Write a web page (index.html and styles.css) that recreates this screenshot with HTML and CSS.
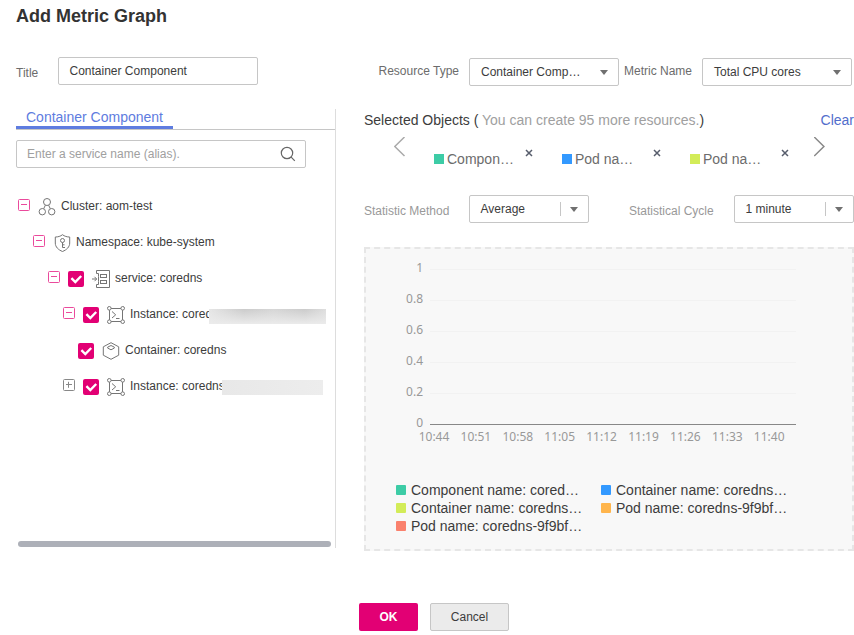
FILE: index.html
```html
<!DOCTYPE html>
<html lang="en">
<head>
<meta charset="utf-8">
<title>Add Metric Graph</title>
<link rel="stylesheet" href="styles.css">
</head>
<body>
<svg class="defs" width="0" height="0" aria-hidden="true">
  <symbol id="minus" viewBox="0 0 12 12"><rect x=".5" y=".5" width="11" height="11" rx="1"/><path d="M3 5.5h6"/></symbol>
  <symbol id="plus" viewBox="0 0 12 12"><rect x=".5" y=".5" width="11" height="11" rx="1"/><path d="M3 5.5h6M5.5 2.800v6"/></symbol>
  <symbol id="check" viewBox="0 0 16 16"><path d="M3.400 7.200l3.900 3.900 5.900-6.100"/></symbol>
  <symbol id="cluster" viewBox="0 0 18 18"><circle cx="9" cy="4" r="3.500"/><circle cx="4.300" cy="13.700" r="3.200"/><circle cx="13.700" cy="13.700" r="3.200"/><path d="M7.400 7.200L5.700 10.700M10.600 7.200l1.700 3.500"/></symbol>
  <symbol id="shield" viewBox="0 0 18 18"><path d="M9.500.7C7.500 2.300 5 3 2.300 3v6c0 4 3 6.800 7.200 8.500C13.700 15.800 16.700 13 16.700 9V3C14 3 11.500 2.300 9.500.7z"/><circle cx="9.500" cy="6.500" r="2"/><path d="M9.500 8.500v5M9.500 10.800h2M9.500 13.500h2.500"/></symbol>
  <symbol id="service" viewBox="0 0 18 18"><path d="M4.500 3.500v-3h13v17h-13v-3M4.500 3.500h2v3M4.500 14.500h2v-3M6.500 6.500v5M0 9h4.500M2.500 6.800L4.700 9l-2.200 2.200"/><rect x="8.500" y="4.500" width="6" height="3"/><rect x="8.500" y="10.500" width="6" height="3"/></symbol>
  <symbol id="instance" viewBox="0 0 18 18"><circle cx="2.300" cy="2.300" r="1.800"/><circle cx="15.700" cy="2.300" r="1.800"/><circle cx="2.300" cy="15.700" r="1.800"/><circle cx="15.700" cy="15.700" r="1.800"/><path d="M4.100 2.500h9.800M4.100 15.500h9.800M2.500 4.100v9.800M15.500 4.100v9.800M5 5.500l3.700 3.300L5 12M9 12.500h3.500"/></symbol>
  <symbol id="container" viewBox="0 0 18 18"><path d="M9 .7l7.700 4.100v8.400L9 17.300l-7.700-4.100V4.800z"/><path d="M9 3.500l3.300 1.600v1L9 7.800 5.700 6.100v-1z"/></symbol>
</svg>
<div class="dialog">
  <h1>Add Metric Graph</h1>

  <div class="form">
    <label class="title-label">Title</label>
    <div class="field title-field">Container Component</div>
    <label class="resource-label">Resource Type</label>
    <div class="field select">Container Comp…<i class="caret"></i></div>
    <label class="metric-label">Metric Name</label>
    <div class="field select">Total CPU cores<i class="caret"></i></div>
  </div>

  <div class="main">
    <section class="left">
      <div class="tabs"><span class="tab">Container Component</span></div>
      <div class="search"><span>Enter a service name (alias).</span>
        <svg width="16" height="16" viewBox="0 0 16 16"><circle cx="7" cy="7" r="5.700"/><path d="M11.200 11.200l3.600 3.600"/></svg>
      </div>
      <div class="tree">
        <div class="node l1"><svg class="toggle"><use href="#minus"/></svg><svg class="icon"><use href="#cluster"/></svg><span>Cluster: aom-test</span></div>
        <div class="node l2"><svg class="toggle"><use href="#minus"/></svg><svg class="icon"><use href="#shield"/></svg><span>Namespace: kube-system</span></div>
        <div class="node l3"><svg class="toggle"><use href="#minus"/></svg><svg class="check"><use href="#check"/></svg><svg class="icon"><use href="#service"/></svg><span>service: coredns</span></div>
        <div class="node l4"><svg class="toggle"><use href="#minus"/></svg><svg class="check"><use href="#check"/></svg><svg class="icon"><use href="#instance"/></svg><span class="cut-a">Instance: cored</span><b class="mask mask-a"></b></div>
        <div class="node l5"><svg class="check"><use href="#check"/></svg><svg class="icon"><use href="#container"/></svg><span>Container: coredns</span></div>
        <div class="node l4"><svg class="toggle closed"><use href="#plus"/></svg><svg class="check"><use href="#check"/></svg><svg class="icon"><use href="#instance"/></svg><span class="cut-b">Instance: coredns</span><b class="mask mask-b"></b></div>
      </div>
      <div class="scrollbar"></div>
    </section>

    <section class="right">
      <div class="selected"><span>Selected Objects ( <em>You can create 95 more resources.</em>)</span><a>Clear</a></div>
      <div class="carousel">
        <svg class="chevron prev" width="12" height="20" viewBox="0 0 12 20"><path d="M10.500 0L.8 9.500l9.700 9.500"/></svg>
        <div class="chip"><i class="dot green"></i><span>Compon…</span><svg class="close" viewBox="0 0 8 8"><path d="M1 1l6 6M7 1L1 7"/></svg></div>
        <div class="chip"><i class="dot blue"></i><span>Pod na…</span><svg class="close" viewBox="0 0 8 8"><path d="M1 1l6 6M7 1L1 7"/></svg></div>
        <div class="chip"><i class="dot lime"></i><span>Pod na…</span><svg class="close" viewBox="0 0 8 8"><path d="M1 1l6 6M7 1L1 7"/></svg></div>
        <svg class="chevron next" width="12" height="20" viewBox="0 0 12 20"><path d="M.2 0L9.900 9.500.2 19"/></svg>
      </div>
      <div class="stats">
        <label class="method-label">Statistic Method</label>
        <div class="field split">Average<i class="caret"></i></div>
        <label class="cycle-label">Statistical Cycle</label>
        <div class="field split">1 minute<i class="caret"></i></div>
      </div>
      <div class="chart">
        <svg class="plot" width="486" height="200" viewBox="366 249 486 200">
          <path class="grid" d="M430 269.500h366M430 300.500h366M430 331.500h366M430 362.500h366M430 393.500h366"/>
          <path class="axis" d="M430 424.500h366"/>
          <g class="y"><text x="423" y="272">1</text><text x="423" y="303">0.8</text><text x="423" y="334">0.6</text><text x="423" y="365">0.4</text><text x="423" y="396">0.2</text><text x="423" y="427">0</text></g>
          <g class="x"><text x="434" y="441">10:44</text><text x="475.900" y="441">10:51</text><text x="517.800" y="441">10:58</text><text x="559.700" y="441">11:05</text><text x="601.600" y="441">11:12</text><text x="643.500" y="441">11:19</text><text x="685.400" y="441">11:26</text><text x="727.300" y="441">11:33</text><text x="769.200" y="441">11:40</text></g>
        </svg>
        <div class="legend">
          <div><i class="dot green"></i>Component name: cored…</div>
          <div><i class="dot blue"></i>Container name: coredns…</div>
          <div><i class="dot lime"></i>Container name: coredns…</div>
          <div><i class="dot orange"></i>Pod name: coredns-9f9bf…</div>
          <div><i class="dot coral"></i>Pod name: coredns-9f9bf…</div>
        </div>
      </div>
    </section>
  </div>

  <div class="actions"><button class="ok">OK</button><button class="cancel">Cancel</button></div>
</div>
</body>
</html>
```
FILE: styles.css
```css
* { box-sizing: border-box; }
body { margin: 0; background: #fff; color: #3c3c3c; font: 12px/16px "Liberation Sans", Arial, sans-serif; overflow: hidden; }
.defs { display: block; height: 0; }
.dialog { width: 854px; height: 635px; overflow: hidden; }
svg { flex: none; fill: none; stroke: #757575; }
h1 { margin: 0; padding-left: 16px; font-size: 18px; line-height: 32px; height: 57px; color: #333; }

.field { flex: none; height: 28px; border: 1px solid #c6c6c6; border-radius: 2px; background: #fff; padding-left: 11px; line-height: 26px; color: #3c3c3c; }
.caret { border: 4.5px solid transparent; border-top: 5px solid #707070; border-bottom: 0; }
label { flex: none; color: #6c6c6c; white-space: nowrap; }

.form { display: flex; height: 52px; padding-left: 16px; align-items: flex-start; }
.title-label { width: 42px; padding-top: 8px; }
.title-field { width: 200px; padding-left: 10.5px; }
.resource-label { width: 211px; padding: 6px 10px 0 0; text-align: right; }
.metric-label { width: 83px; padding: 6px 10px 0 5px; }
.select { width: 150px; margin-top: 1px; display: flex; justify-content: space-between; align-items: center; padding-right: 10px; }

.main { display: flex; height: 494px; }
.left { width: 320px; height: 439px; margin-left: 16px; border-right: 1px solid #ddd; }
.tabs { height: 21px; border-bottom: 1px solid #c6c6c6; }
.tab { display: block; width: 157px; height: 20px; padding-left: 10px; border-bottom: 3px solid #5e7ce0; color: #5e7ce0; font-size: 14px; line-height: 17px; white-space: nowrap; }
.search { display: flex; align-items: center; justify-content: space-between; width: 290px; height: 28px; margin-top: 10px; padding: 0 9px 0 10px; border: 1px solid #c6c6c6; border-radius: 2px; color: #a0a0a0; }
.search svg { stroke: #666; stroke-width: 1.2; }
.tree { height: 373px; padding-top: 20px; }
.node { display: flex; align-items: center; height: 36px; white-space: nowrap; }
.l1 { padding-left: 2px; }
.l2 { padding-left: 17px; }
.l3 { padding-left: 32px; }
.l4 { padding-left: 47px; }
.l5 { padding-left: 62px; }
.toggle { width: 12px; height: 12px; margin: 0 8px 2px 0; stroke: #ea4a9c; }
.closed { stroke: #888; }
.check { width: 16px; height: 16px; margin: 2px 8px 0 0; border-radius: 2px; background: #e20074; stroke: #fff; stroke-width: 2.4; }
.icon { width: 18px; height: 18px; margin: 2px 5px 0 0; }
.cut-a { width: 79px; }
.cut-b { width: 92px; }
.mask { position: relative; height: 15px; }
.mask-a { width: 117px; margin-top: 5px; background: linear-gradient(rgba(236,236,236,0), #ebebeb), linear-gradient(90deg, #e6e6e6, #cbcbcb 30%, #d6d6d6 55%, #cbcbcb 82%, #dedede); }
.mask-b { width: 101px; margin-top: 2px; background: linear-gradient(90deg, #e8e8e8, #ededed); }
.scrollbar { width: 313px; height: 6px; margin: 0 0 0 2px; border-radius: 3px; background: #adb0b8; }

.right { width: 490px; margin-left: 28px; }
.selected { display: flex; justify-content: space-between; height: 28px; font-size: 14px; line-height: 22px; white-space: nowrap; }
.selected em { color: #a0a0a0; font-style: normal; }
.selected a { color: #526ecc; }
.carousel { display: flex; height: 58px; padding-left: 30px; }
.chevron { stroke: #888; stroke-width: 1.5; }
.prev { margin-right: 28px; stroke: #aaa; }
.next { margin-left: -4px; }
.chip { display: flex; width: 128px; height: 44px; color: #6c6c6c; font-size: 14px; line-height: 44px; }
.dot { flex: none; width: 10px; height: 10px; }
.chip .dot { margin: 17px 3px 0 0; }
.chip span { width: 78px; }
.close { width: 8px; height: 8px; margin-top: 12px; stroke: #575d6c; stroke-width: 1.5; }
.green { background: #3dcca6; }
.blue { background: #3399ff; }
.lime { background: #d3ec58; }
.orange { background: #ffb54c; }
.coral { background: #fa816d; }

.stats { display: flex; height: 52px; }
.stats label { padding-top: 8px; color: #999; }
.method-label { width: 105px; }
.cycle-label { width: 145px; padding-left: 40px; }
.split { width: 120px; display: grid; grid-template-columns: 1fr 28px; align-items: center; padding-left: 10.5px; }
.split .caret { justify-self: center; position: relative; }
.split .caret::before { content: ""; position: absolute; left: -14px; top: -10px; height: 14px; border-left: 1px solid #c6c6c6; }
.chart { height: 304px; border: 2px dashed #e6e6e6; background: #f8f8f8; }
.plot { display: block; }
.grid { stroke: #f2f2f2; }
.axis { stroke: #888; }
.plot text { fill: #999; stroke: none; font: 12px "Noto Sans", "Open Sans", sans-serif; }
.y { text-anchor: end; }
.x { text-anchor: middle; }
.legend { display: grid; grid-template-columns: 205px 190px; grid-auto-rows: 18px; padding: 32px 0 0 30px; font-size: 14px; line-height: 18px; white-space: nowrap; }
.legend div { display: flex; }
.legend .dot { margin: 4px 5px 0 0; border-radius: 1px; }

.actions { display: flex; gap: 12px; padding-left: 359px; }
button { height: 28px; padding: 0; border-radius: 2px; font: 12px "Liberation Sans", Arial, sans-serif; }
.ok { width: 59px; border: 0; background: #e20074; color: #fff; font-weight: bold; }
.cancel { width: 79px; border: 1px solid #c6c6c6; background: #ebebeb; color: #3c3c3c; }
```
